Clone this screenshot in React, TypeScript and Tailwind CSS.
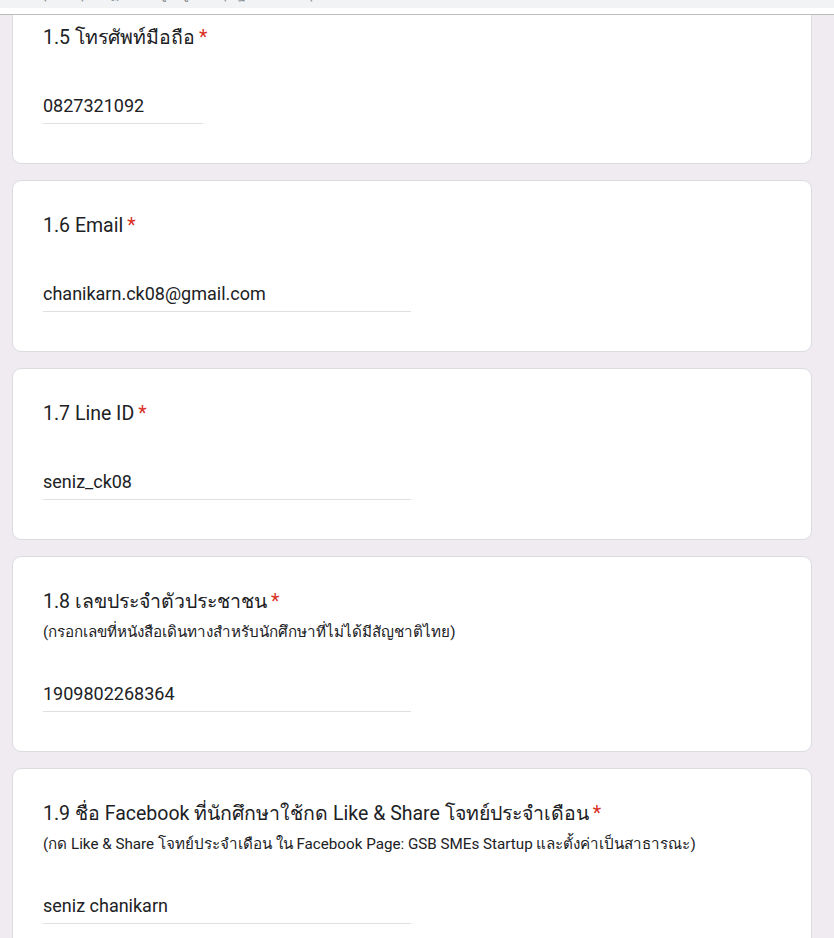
import React from "react";

type Question = {
    title: string;
    hint?: string;
    answer: string;
    inputWidth: string;
};

const questions: Question[] = [
    { title: "1.6 Email", answer: "chanikarn.ck08@gmail.com", inputWidth: "w-[368px]" },
    { title: "1.7 Line ID", answer: "seniz_ck08", inputWidth: "w-[368px]" },
    {
        title: "1.8 เลขประจำตัวประชาชน",
        hint: "(กรอกเลขที่หนังสือเดินทางสำหรับนักศึกษาที่ไม่ได้มีสัญชาติไทย)",
        answer: "1909802268364",
        inputWidth: "w-[368px]",
    },
    {
        title: "1.9 ชื่อ Facebook ที่นักศึกษาใช้กด Like & Share โจทย์ประจำเดือน",
        hint: "(กด Like & Share โจทย์ประจำเดือน ใน Facebook Page: GSB SMEs Startup และตั้งค่าเป็นสาธารณะ)",
        answer: "seniz chanikarn",
        inputWidth: "w-[368px]",
    },
];

function QuestionCard({ q }: { q: Question }) {
    return (
        <div className="bg-white border border-[#dadce0] rounded-[9px] px-[30px] pt-[31px] pb-[39px]">
            {/* Title */}
            <div className="text-[19.5px] leading-[28px] text-[#202124] font-['Roboto','Noto_Sans',sans-serif]">
                {q.title}
                <span className="text-[#d93025] ml-[4px]">*</span>
            </div>
            {q.hint && (
                <div className="mt-[7px] text-[15.2px] leading-[18px] text-[#202124] font-['Roboto','Noto_Sans',sans-serif]">
                    {q.hint}
                </div>
            )}

            {/* Answer */}
            <div className={`${q.hint ? "mt-[41px]" : "mt-[42px]"} ${q.inputWidth} border-b border-[#e0e0e0] pb-[5px]`}>
                <div className="text-[18px] leading-[24px] text-[#202124] font-['Roboto',sans-serif]">{q.answer}</div>
            </div>
        </div>
    );
}

export default function App() {
    return (
        <div className="relative h-[938px] overflow-hidden bg-[#f0ebf0]">
            {/* Sticky top strip, mostly scrolled away */}
            <div className="absolute top-0 left-0 right-0 z-10">
                <div className="h-[8px] bg-[#f1f3f4] overflow-hidden">
                    <div className="-mt-[17px] pl-[38px] text-[14px] leading-[20px] text-[#80868b] font-['Roboto',sans-serif] whitespace-nowrap">
                        ปุ่ม ถ้าคุณ ปฏิบัติ ข้อมูล ดูแล ปรุง ฐาน ตกลง ปุ
                    </div>
                </div>
                <div className="h-[6px] bg-white" />
                <div className="h-px bg-[#bdbdbd]" />
            </div>

            {/* Form cards */}
            <div className="ml-[12px] w-[800px] flex flex-col gap-[16px] -mt-[8px]">
                <QuestionCard q={{ title: "1.5 โทรศัพท์มือถือ", answer: "0827321092", inputWidth: "w-[160px]" }} />
                {questions.map((q) => (
                    <QuestionCard key={q.title} q={q} />
                ))}
            </div>
        </div>
    );
}
